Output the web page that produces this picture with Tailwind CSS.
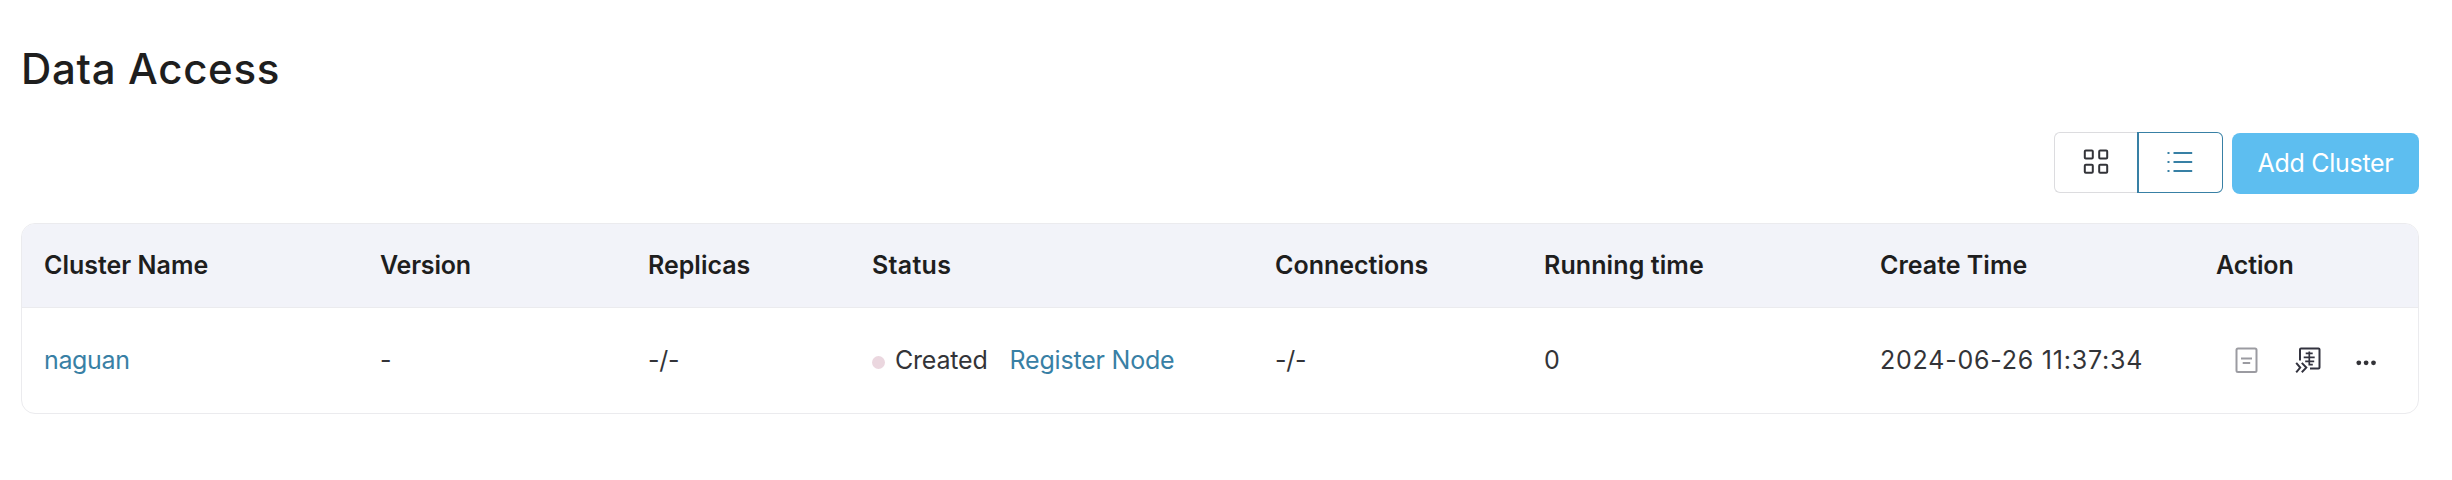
<!DOCTYPE html>
<html lang="en">
<head>
<meta charset="utf-8">
<title>Data Access</title>
<script src="https://cdn.jsdelivr.net/npm/@tailwindcss/browser@4"></script>
</head>
<body class="bg-white font-['Inter','Liberation_Sans',sans-serif] text-[25px] leading-[30px] text-[#333438]">
<main class="h-[480px] overflow-hidden pl-[21px] pr-[33px] pt-[44px]">
  <h1 class="text-[42px] leading-[50px] font-medium tracking-[0.68px] text-[#1e1e1e]">Data Access</h1>

  <div class="mt-[38px] flex h-[62px] items-start justify-end">
    <div class="flex h-[61px] w-[169px]">
      <button class="flex w-[83px] items-center justify-center rounded-l-md border border-r-0 border-[#dcdcdf] pb-px">
        <svg class="h-[26px] w-[26px]" viewBox="0 0 26 26" fill="none" stroke="#323338" stroke-width="2">
          <rect x="1.8" y="1.6" width="8" height="8" rx="1"/>
          <rect x="16.2" y="1.6" width="8" height="8" rx="1"/>
          <rect x="1.8" y="15.8" width="8" height="8" rx="1"/>
          <rect x="16.2" y="15.8" width="8" height="8" rx="1"/>
        </svg>
      </button>
      <button class="flex w-[86px] items-center justify-center rounded-r-md border border-l-2 border-[#3880a5] pr-px pb-px">
        <svg class="h-[26px] w-[26px]" viewBox="0 0 26 26" stroke="#3880a5" stroke-width="2">
          <path d="M.5 4h2M6.500 4h18.700M.5 13h2M6.500 13h18.700M.5 22h2M6.500 22h18.700"/>
        </svg>
      </button>
    </div>
    <button class="mt-px ml-[9px] flex h-[61px] w-[187px] items-center justify-center rounded-lg bg-[#5dbef0] pb-px tracking-[-0.3px] text-white">Add Cluster</button>
  </div>

  <section class="mt-[29px] h-[191px] overflow-hidden rounded-[14px] border border-[#ebebee]">
    <div class="grid h-[84px] grid-cols-[336px_268px_224px_403px_269px_336px_336px_1fr] items-center border-b border-[#ebebee] bg-[#f2f3f9] pb-[2px] pl-[22px] font-semibold text-[#1e1e1e]">
      <span>Cluster Name</span><span class="tracking-[-0.2px]">Version</span><span>Replicas</span><span class="tracking-[0.3px]">Status</span><span>Connections</span><span class="tracking-[0.1px]">Running time</span><span>Create Time</span><span class="tracking-[-0.1px]">Action</span>
    </div>
    <div class="grid h-[105px] grid-cols-[336px_268px_224px_403px_269px_336px_336px_1fr] items-center pb-[2px] pl-[22px]">
      <a class="tracking-[-0.35px] text-[#3880a5]">naguan</a>
      <span>-</span>
      <span class="tracking-[-0.3px]">-/-</span>
      <div class="flex items-center">
        <i class="mt-[5px] h-[13px] w-[13px] rounded-full bg-[#ebd7df]"></i>
        <span class="ml-[10px] tracking-[-0.2px]">Created</span>
        <a class="ml-[22px] tracking-[-0.2px] text-[#3880a5]">Register Node</a>
      </div>
      <span class="tracking-[-0.3px]">-/-</span>
      <span>0</span>
      <span class="tracking-[0.78px]">2024-06-26 11:37:34</span>
      <div class="flex items-center pl-[18px]">
        <svg class="h-[30px] w-[26px]" viewBox="0 0 26 30" fill="none" stroke="#9b9ba1" stroke-width="2">
          <rect x="2.500" y="3.500" width="20" height="23.500" rx="1.500"/>
          <path d="M7 13.400h11M8.700 17.900h7.500"/>
        </svg>
        <svg class="ml-[34px] h-[30px] w-[30px]" viewBox="0 0 30 30" fill="none" stroke="#33333f" stroke-width="2">
          <path d="M6 15.500V4.500a1 1 0 0 1 1-1h17.500a1 1 0 0 1 1 1V22.500a1 1 0 0 1-1 1H16"/>
          <path d="M15.300 6.500V19.600h3.500M11.700 8.400h7M9.700 12.400h11M11.200 16.300h9" stroke-width="1.700"/>
          <path d="M2.200 17.900l4 4.700-4 4.700M7.800 17.900l4.500 4.700-4.500 4.700"/>
        </svg>
        <svg class="ml-[30px] h-[30px] w-[26px]" viewBox="0 0 26 30" fill="#333338">
          <circle cx="4.800" cy="17.800" r="2.400"/><circle cx="12.100" cy="17.800" r="2.400"/><circle cx="19.500" cy="17.800" r="2.400"/>
        </svg>
      </div>
    </div>
  </section>
</main>
</body>
</html>
